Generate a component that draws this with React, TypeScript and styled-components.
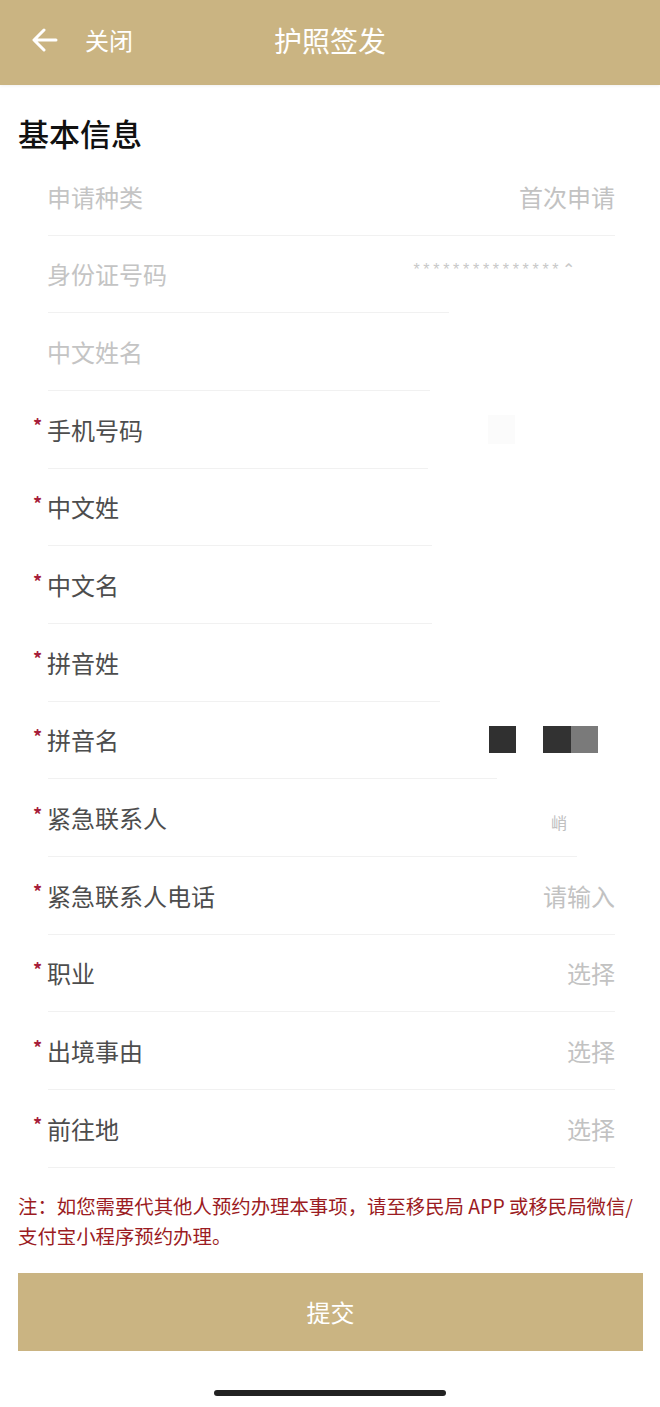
import styled, { createGlobalStyle } from 'styled-components';

const GlobalStyle = createGlobalStyle`
  html, body {
    margin: 0;
    padding: 0;
    background: #ffffff;
    font-family: "Noto Sans CJK SC", "Noto Sans", sans-serif;
  }
`;

const GOLD = '#cab482';

interface FieldRow {
  label: string;
  required?: boolean;
  disabled?: boolean;
  value?: string;
  placeholder?: string;
  masked?: 'id' | 'blocks' | 'faint' | 'partial';
  lineWidth: number;
}

const rows: FieldRow[] = [
  { label: '申请种类', disabled: true, value: '首次申请', lineWidth: 567 },
  { label: '身份证号码', disabled: true, masked: 'id', lineWidth: 401 },
  { label: '中文姓名', disabled: true, lineWidth: 382 },
  { label: '手机号码', required: true, masked: 'faint', lineWidth: 380 },
  { label: '中文姓', required: true, lineWidth: 384 },
  { label: '中文名', required: true, lineWidth: 384 },
  { label: '拼音姓', required: true, lineWidth: 392 },
  { label: '拼音名', required: true, masked: 'blocks', lineWidth: 449 },
  { label: '紧急联系人', required: true, masked: 'partial', lineWidth: 529 },
  { label: '紧急联系人电话', required: true, placeholder: '请输入', lineWidth: 567 },
  { label: '职业', required: true, placeholder: '选择', lineWidth: 567 },
  { label: '出境事由', required: true, placeholder: '选择', lineWidth: 567 },
  { label: '前往地', required: true, placeholder: '选择', lineWidth: 567 },
];

const Page = styled.div`
  width: 660px;
  min-height: 1407px;
  display: flex;
  flex-direction: column;
  background: #ffffff;
`;

const Header = styled.header`
  height: 85px;
  box-sizing: border-box;
  padding-bottom: 5px;
  background: ${GOLD};
  display: grid;
  grid-template-columns: 1fr auto 1fr;
  align-items: center;
  color: #ffffff;
  box-shadow: 0 1px 3px rgba(0, 0, 0, 0.06);
`;

const BackButton = styled.div`
  display: flex;
  align-items: center;
  gap: 27px;
  padding-left: 32px;
  font-size: 24px;
  line-height: 1;
`;

const Title = styled.h1`
  margin: 0;
  font-size: 28px;
  font-weight: 400;
  line-height: 1;
`;

const SectionTitle = styled.h2`
  margin: 0;
  height: 73px;
  display: flex;
  align-items: center;
  padding-left: 18px;
  padding-top: 22px;
  box-sizing: border-box;
  font-size: 31px;
  font-weight: 500;
  color: #111111;
`;

const List = styled.div`
  display: flex;
  flex-direction: column;
`;

const Item = styled.div`
  padding-left: 33px;
`;

const Line = styled.div`
  height: 76.66px;
  display: flex;
  align-items: center;
  padding-right: 45px;
`;

const Star = styled.span<{ $show: boolean }>`
  width: 15px;
  flex: none;
  align-self: center;
  margin-top: -8px;
  color: #a61d3a;
  font-size: 18px;
  font-weight: 700;
  visibility: ${({ $show }) => ($show ? 'visible' : 'hidden')};
`;

const Label = styled.span<{ $disabled?: boolean }>`
  flex: 1;
  margin-left: -1px;
  font-size: 24px;
  color: ${({ $disabled }) => ($disabled ? '#c4c4c4' : '#4d4d4d')};
`;

const Value = styled.span`
  font-size: 24px;
  color: #c2c2c2;
`;

const MaskedId = styled.span`
  font-family: "Liberation Sans", sans-serif;
  font-size: 16px;
  letter-spacing: 3.7px;
  color: #c8c8c8;
  margin-right: 36px;
  margin-top: -8px;
`;

const Blocks = styled.div`
  display: flex;
  gap: 27px;
  margin-right: 17px;
`;

const Block = styled.span<{ $tone: string; $w: number }>`
  width: ${({ $w }) => $w}px;
  height: 27px;
  background: ${({ $tone }) => $tone};
`;

const BlockPair = styled.div`
  display: flex;
`;

const Faint = styled.span`
  width: 27px;
  height: 29px;
  margin-right: 100px;
  background: #fbfbfb;
`;

const Partial = styled.span`
  font-size: 16px;
  color: #c0c0c0;
  margin-right: 48px;
  margin-top: 8px;
`;

const Divider = styled.div<{ $w: number }>`
  margin-left: 15px;
  width: ${({ $w }) => $w}px;
  height: 1px;
  background: #f1f1f1;
`;

const Note = styled.p`
  margin: 23px 10px 0 18px;
  font-size: 19.4px;
  line-height: 30px;
  color: #9b1b22;
`;

const SubmitButton = styled.button`
  margin: 22px 17px 0 18px;
  height: 78px;
  border: none;
  background: ${GOLD};
  color: #ffffff;
  font-family: inherit;
  font-size: 24px;
`;

const HomeBar = styled.div`
  width: 232px;
  height: 6px;
  border-radius: 3px;
  background: #222222;
  margin: 39px auto 0;
`;

function BackArrow() {
  return (
    <svg width="26" height="24" viewBox="0 0 26 24" fill="none">
      <path
        d="M24 12H3M12 2L2 12l10 10"
        stroke="#ffffff"
        strokeWidth="3"
        strokeLinecap="round"
        strokeLinejoin="round"
      />
    </svg>
  );
}

function RowValue({ row }: { row: FieldRow }) {
  if (row.masked === 'id') return <MaskedId>***************⌃</MaskedId>;
  if (row.masked === 'faint') return <Faint />;
  if (row.masked === 'partial') return <Partial>峭</Partial>;
  if (row.masked === 'blocks') {
    return (
      <Blocks>
        <Block $tone="#303030" $w={27} />
        <BlockPair>
          <Block $tone="#323232" $w={28} />
          <Block $tone="#7a7a7a" $w={27} />
        </BlockPair>
      </Blocks>
    );
  }
  if (row.value) return <Value>{row.value}</Value>;
  if (row.placeholder) return <Value>{row.placeholder}</Value>;
  return null;
}

export default function App() {
  return (
    <>
      <GlobalStyle />
      <Page>
        <Header>
          <BackButton>
            <BackArrow />
            <span>关闭</span>
          </BackButton>
          <Title>护照签发</Title>
          <div />
        </Header>

        <SectionTitle>基本信息</SectionTitle>

        <List>
          {rows.map((row) => (
            <Item key={row.label}>
              <Line>
                <Star $show={!!row.required}>*</Star>
                <Label $disabled={row.disabled}>{row.label}</Label>
                <RowValue row={row} />
              </Line>
              <Divider $w={row.lineWidth} />
            </Item>
          ))}
        </List>

        <Note>
          注：如您需要代其他人预约办理本事项，请至移民局 APP 或移民局微信/
          <br />
          支付宝小程序预约办理。
        </Note>

        <SubmitButton type="button">提交</SubmitButton>

        <HomeBar />
      </Page>
    </>
  );
}
